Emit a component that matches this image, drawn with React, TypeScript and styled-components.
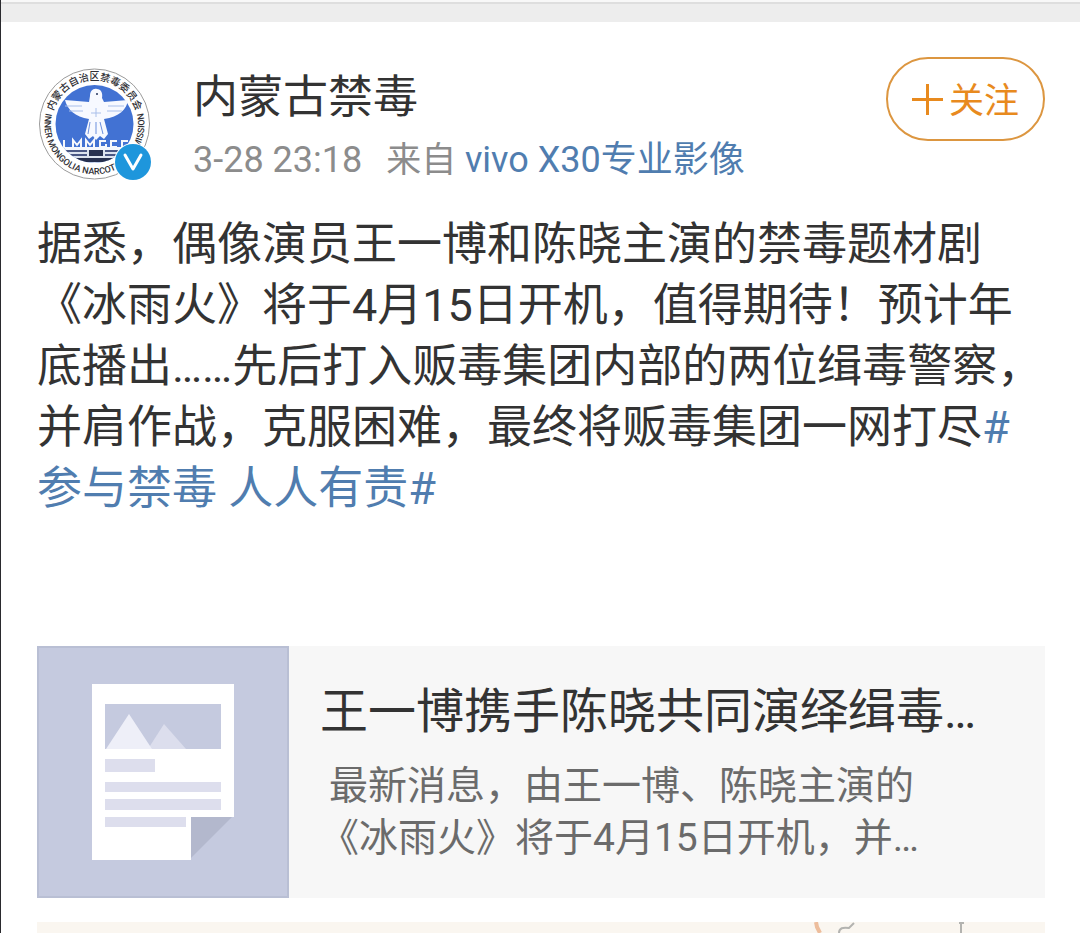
import React from 'react';
import styled, { createGlobalStyle } from 'styled-components';

const GlobalStyle = createGlobalStyle`
  * { box-sizing: border-box; }
  body {
    margin: 0;
    background: #fff;
    color: #333;
    font-family: Roboto, "Noto Sans CJK SC", sans-serif;
  }
  h1, h2, p { margin: 0; font-weight: 400; }
  a { text-decoration: none; color: inherit; }
`;

const Page = styled.main`
  min-height: 100vh;
  border-left: 1px solid #2a2a2e;
`;

const TopBand = styled.div`
  height: 22px;
  background: #ededed;
  border-top: 2px solid #f8f8f8;
  box-shadow: inset 0 2px 0 #dedede;
`;

const Post = styled.article`
  padding: 35px 35px 0 36px;
`;

const Header = styled.header`
  display: flex;
  align-items: flex-start;
`;

const Avatar = styled.a`
  display: block;
  flex: none;
  width: 116px;
  height: 116px;
  margin-top: 9px;
  svg { display: block; }
`;

const Author = styled.div`
  flex: 1;
  min-width: 0;
  padding: 9px 0 0 40px;
`;

const Name = styled.h1`
  font-size: 45px;
  line-height: 64px;
`;

const Meta = styled.div`
  display: flex;
  align-items: baseline;
  font-size: 36px;
  line-height: 60px;
  color: #8c8c8c;
  white-space: nowrap;
`;

const Source = styled.span`
  margin-left: 24px;
  font-size: 35px;
`;

const TextLink = styled.a`
  color: #507daf;
`;

const DeviceLink = styled(TextLink)`
  font-size: 36px;
`;

const FollowButton = styled.button`
  display: flex;
  align-items: center;
  justify-content: center;
  gap: 6px;
  flex: none;
  width: 159px;
  height: 84px;
  padding: 0;
  border: 2px solid #dc9640;
  border-radius: 42px;
  background: #fff;
  color: #e88a1e;
  font: inherit;
  font-size: 35px;
  line-height: 48px;
`;

const FollowLabel = styled.span`
  padding-top: 6px;
`;

const Body = styled.p`
  margin-top: 23px;
  font-size: 45px;
  line-height: 61px;
`;

const Card = styled.a`
  display: flex;
  margin-top: 127px;
  background: #f7f7f7;
`;

const Thumb = styled.div`
  flex: none;
  width: 252px;
  height: 252px;
  border: 2px solid #b9bfd4;
  background: #c5cadf;
  svg { display: block; }
`;

const CardText = styled.div`
  flex: 1;
  min-width: 0;
  padding: 32px 0 0 31px;
`;

const CardTitle = styled.h2`
  font-size: 48px;
  line-height: 68px;
  white-space: nowrap;
`;

const CardSummary = styled.p`
  max-width: 620px;
  padding-top: 14px;
  font-size: 39px;
  line-height: 52px;
  text-indent: 9px;
  color: #6b6b6b;
`;

const MapStrip = styled.div`
  height: 11px;
  margin-top: 24px;
  overflow: hidden;
  background: #faf6f0;
  svg { display: block; margin-left: auto; }
`;

const Emblem = () => (
  <svg width="116" height="116" viewBox="0 0 116 116" role="img" aria-label="内蒙古禁毒">
    <defs>
      <path id="ringTop" d="M 16 46 A 43 43 0 0 1 99 46" />
      <path id="ringBottom" d="M 11 40 A 50 50 0 1 0 104 40" />
      <clipPath id="disc"><circle cx="57.5" cy="58" r="39" /></clipPath>
    </defs>
    <circle cx="57.5" cy="58" r="55" fill="#fff" stroke="#9b9b9b" strokeWidth="1" />
    <circle cx="57.5" cy="58" r="39" fill="#4272d3" />
    <g clipPath="url(#disc)">
      <path d="M15 84h85v16H15z" fill="#dce3ef" />
      <path d="M52 84h14v6H52z M38 92h40v4H38z" fill="#27304f" />
      <path d="M20 85h30M68 85h27M20 89h30M68 89h27" stroke="#4a5784" strokeWidth="2" />
      <path d="M20 81h75v3H20z" fill="#f5f7fc" />
      <path d="M27 74v8M36 82v-8l4 5 4-5v8M49 82v-8l4 5 4-5v8M69 75h-6v6h6v-3M80 75h-6v6h6M91 75h-6v6h6" fill="none" stroke="#f5f7fc" strokeWidth="2" />
    </g>
    <path d="M53 30c0-5 3-8 7-7 4 0 6 4 5 9l2 4 24-2c-1 9-9 17-24 19l4 15-4 5-4-3-4 4-3-4-4 3-4-5 4-15c-14-2-22-10-24-19l24 2z" fill="#f7f9ff" />
    <path d="M53 56l-2 12M59 56v12M63 56l3 12" stroke="#6b8fdd" strokeWidth="1" fill="none" />
    <path d="M28 40h17M32 45h14M71 40h16M70 45h15M54 47h10M59 42v9" stroke="#a9bfea" strokeWidth="1" fill="none" />
    <circle cx="60" cy="28" r="1" fill="#26345c" />
    <text fontSize="10" fontWeight="500" fill="#303035" textAnchor="middle">
      <textPath href="#ringTop" startOffset="50%">内蒙古自治区禁毒委员会</textPath>
    </text>
    <text fontSize="9" fontWeight="500" fill="#303035" textAnchor="middle">
      <textPath href="#ringBottom" startOffset="50%">INNER MONGOLIA NARCOTIC COMMISSION</textPath>
    </text>
    <circle cx="96" cy="96" r="19" fill="#fff" />
    <circle cx="96" cy="96" r="18" fill="#1e96dc" />
    <path d="M88 89l8 14 8-14" fill="none" stroke="#fff" strokeWidth="3" strokeLinejoin="round" strokeLinecap="round" />
  </svg>
);

const PlusIcon = () => (
  <svg width="31" height="31" viewBox="0 0 31 31" aria-hidden="true">
    <path d="M15.5 0v31M0 15.5h31" stroke="currentColor" strokeWidth="3" />
  </svg>
);

const ArticleIcon = () => (
  <svg width="248" height="248" viewBox="2 2 248 248" aria-hidden="true">
    <path d="M55 38h142v133l-43 43H55z" fill="#fff" />
    <path d="M154 171h43v50h-43z" fill="#c5cadf" />
    <path d="M154 171h41l-41 41z" fill="#b3b8cd" />
    <path d="M68 58h116v45H68z" fill="#c5cadf" />
    <path d="M111 103l16-25 22 25z" fill="#dcdeed" />
    <path d="M69 103l23-35 23 35z" fill="#eeeff8" />
    <path d="M68 113h50v13H68zM68 136h116v10H68zM68 153h116v11H68zM68 171h81v10H68z" fill="#dddeed" />
  </svg>
);

const MapLines = () => (
  <svg width="240" height="11" viewBox="0 0 240 11" aria-hidden="true">
    <g fill="none" strokeWidth="2">
      <path d="M11 0l1 5 3 6" stroke="#edbd9c" strokeWidth="4" />
      <path d="M34 11c0-5 4-6 10-5l5-5" stroke="#b3b3b0" />
      <path d="M154 1h5M156 0v11" stroke="#b3b3b0" />
    </g>
  </svg>
);

export default function App() {
  return (
    <>
      <GlobalStyle />
      <Page lang="zh-CN">
        <TopBand />
        <Post>
          <Header>
            <Avatar href="#profile"><Emblem /></Avatar>
            <Author>
              <Name>内蒙古禁毒</Name>
              <Meta>
                <time>3-28 23:18</time>
                <Source>来自 <DeviceLink href="#source">vivo X30专业影像</DeviceLink></Source>
              </Meta>
            </Author>
            <FollowButton type="button"><PlusIcon /><FollowLabel>关注</FollowLabel></FollowButton>
          </Header>
          <Body>
            据悉，偶像演员王一博和陈晓主演的禁毒题材剧《冰雨火》将于4月15日开机，值得期待！预计年底播出……先后打入贩毒集团内部的两位缉毒警察，并肩作战，克服困难，最终将贩毒集团一网打尽<TextLink href="#topic">#参与禁毒 人人有责#</TextLink>
          </Body>
          <Card href="#article">
            <Thumb><ArticleIcon /></Thumb>
            <CardText>
              <CardTitle>王一博携手陈晓共同演绎缉毒…</CardTitle>
              <CardSummary>最新消息，由王一博、陈晓主演的《冰雨火》将于4月15日开机，并…</CardSummary>
            </CardText>
          </Card>
          <MapStrip><MapLines /></MapStrip>
        </Post>
      </Page>
    </>
  );
}
